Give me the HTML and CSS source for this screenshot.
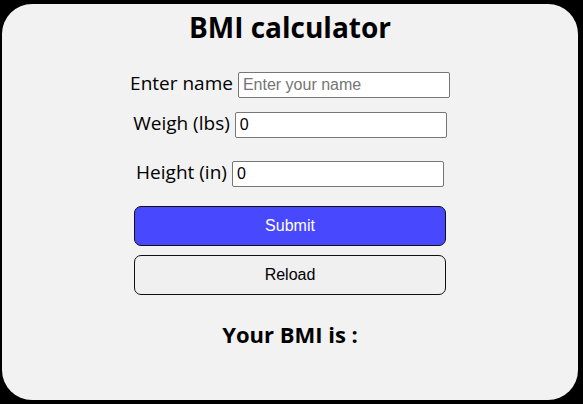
FILE: index.html
```html
<!DOCTYPE html>
<html>
<head>
<meta charset="utf-8">
<link rel="stylesheet" href="styles.css">
</head>
<body>
<div class="card">
  <h1 class="title">BMI calculator</h1>
  <div class="row row-name">
    <label class="label">Enter name</label>
    <input class="field" type="text" placeholder="Enter your name">
  </div>
  <div class="row row-weight">
    <label class="label">Weigh (lbs)</label>
    <input class="field" type="text" value="0">
  </div>
  <div class="row row-height">
    <label class="label">Height (in)</label>
    <input class="field" type="text" value="0">
  </div>
  <button class="btn btn-submit">Submit</button>
  <button class="btn btn-reload">Reload</button>
  <h2 class="result">Your BMI is :</h2>
</div>
</body>
</html>
```
FILE: styles.css
```css
html, body {
  margin: 0;
  padding: 0;
  background: #000;
  width: 583px;
  height: 404px;
  overflow: hidden;
}
.card {
  box-sizing: border-box;
  margin: 4px 5px 4px 2px;
  height: 396px;
  background: #f2f2f2;
  border-radius: 30px;
  display: flex;
  flex-direction: column;
  align-items: center;
  font-family: "Open Sans", "Noto Sans", sans-serif;
  color: #000;
}
.title {
  margin: 3px 0 0 0;
  font-size: 28px;
  line-height: 40px;
  font-weight: 700;
}
.row {
  display: flex;
  align-items: center;
  gap: 5px;
}
.row-name { margin-top: 25px; }
.row-weight { margin-top: 14px; }
.row-height { margin-top: 23px; }
.label {
  font-size: 19px;
  line-height: 20px;
  padding-bottom: 4px;
}
.field {
  box-sizing: border-box;
  width: 212px;
  height: 26px;
  margin: 0;
  padding: 1px 4px;
  border: 1px solid #767676;
  border-radius: 2px;
  background: #fff;
  font-family: "Liberation Sans", Arial, sans-serif;
  font-size: 16px;
  color: #000;
}
.field::placeholder { color: #757575; }
.btn {
  box-sizing: border-box;
  width: 312px;
  height: 40px;
  border: 1px solid #111;
  border-radius: 7px;
  font-family: "Liberation Sans", Arial, sans-serif;
  font-size: 16px;
  padding: 0;
}
.btn-submit {
  margin-top: 19px;
  background: #4848ff;
  color: #fff;
}
.btn-reload {
  margin-top: 9px;
  background: #f0f0f0;
  color: #000;
}
.result {
  margin: 24px 0 0 0;
  font-size: 22px;
  line-height: 30px;
  font-weight: 700;
}
```
